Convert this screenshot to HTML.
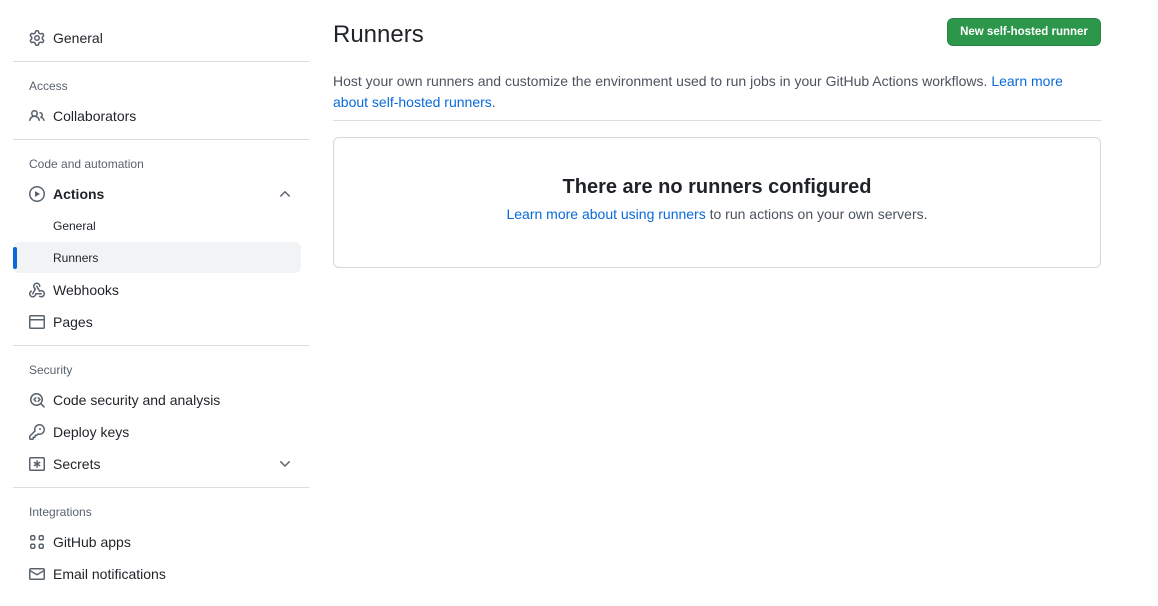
<!DOCTYPE html>
<html><head><style>
*{box-sizing:border-box;margin:0;padding:0}
body{width:1158px;height:606px;background:#fff;font-family:"Liberation Sans",sans-serif;color:#1f2328;position:relative;overflow:hidden}
.abs{position:absolute}
.item{position:absolute;left:13px;width:288px;height:32px;display:flex;align-items:center;font-size:14px}
.item svg{position:absolute;left:16px;width:16px;height:16px;fill:#59636e}
.item span{position:absolute;left:40px}
.hd{position:absolute;left:29px;font-size:12px;color:#59636e;font-weight:normal}
.hr{position:absolute;left:13px;width:296px;height:1px;background:#d8dee4}
.sub{font-size:12px}
a{color:#0969da;text-decoration:none}
</style></head><body>
<div class="item" style="top:22px"><svg viewBox="0 0 16 16"><path d="M8 0a8.2 8.2 0 0 1 .701.031C9.444.095 9.99.645 10.16 1.29l.288 1.107c.018.066.079.158.212.224.231.114.454.243.668.386.123.082.233.09.299.071l1.103-.303c.644-.176 1.392.021 1.82.63.27.385.506.792.704 1.218.315.675.111 1.422-.364 1.891l-.814.806c-.049.048-.098.147-.088.294.016.257.016.515 0 .772-.01.147.038.246.088.294l.814.806c.475.469.679 1.216.364 1.891a7.977 7.977 0 0 1-.704 1.217c-.428.61-1.176.807-1.82.63l-1.102-.302c-.067-.019-.177-.011-.3.071a5.909 5.909 0 0 1-.668.386c-.133.066-.194.158-.211.224l-.29 1.106c-.168.646-.715 1.196-1.458 1.26a8.006 8.006 0 0 1-1.402 0c-.743-.064-1.289-.614-1.458-1.26l-.289-1.106c-.018-.066-.079-.158-.212-.224a5.738 5.738 0 0 1-.668-.386c-.123-.082-.233-.09-.299-.071l-1.103.303c-.644.176-1.392-.021-1.820-.63a8.12 8.12 0 0 1-.704-1.218c-.315-.675-.111-1.422.363-1.891l.815-.806c.05-.048.098-.147.088-.294a6.214 6.214 0 0 1 0-.772c.01-.147-.038-.246-.088-.294l-.815-.806C.635 6.045.431 5.298.746 4.623a7.92 7.92 0 0 1 .704-1.217c.428-.61 1.176-.807 1.82-.63l1.102.302c.067.019.177.011.3-.071.214-.143.437-.272.668-.386.133-.066.194-.158.211-.224l.29-1.106C6.009.645 6.556.095 7.299.03 7.53.01 7.764 0 8 0Zm-.571 1.525c-.036.003-.108.036-.137.146l-.289 1.105c-.147.561-.549.967-.998 1.189-.173.086-.34.183-.5.29-.417.278-.97.423-1.529.27l-1.103-.303c-.109-.03-.175.016-.195.045-.22.312-.412.644-.573.99-.014.031-.021.11.059.19l.815.806c.411.406.562.957.53 1.456a4.709 4.709 0 0 0 0 .582c.032.499-.119 1.05-.53 1.456l-.815.806c-.081.08-.073.159-.059.19.162.346.353.677.573.989.02.03.085.076.195.046l1.102-.303c.56-.153 1.113-.008 1.53.27.161.107.328.204.501.29.447.222.85.629.997 1.189l.289 1.105c.029.109.101.143.137.146a6.6 6.6 0 0 0 1.142 0c.036-.003.108-.036.137-.146l.289-1.105c.147-.561.549-.967.998-1.189.173-.086.34-.183.5-.29.417-.278.97-.423 1.529-.27l1.103.303c.109.029.175-.016.195-.045.22-.313.411-.644.573-.99.014-.031.021-.11-.059-.19l-.815-.806c-.411-.406-.562-.957-.53-1.456a4.709 4.709 0 0 0 0-.582c-.032-.499.119-1.05.53-1.456l.815-.806c.081-.08.073-.159.059-.19a6.464 6.464 0 0 0-.573-.989c-.02-.03-.085-.076-.195-.046l-1.102.303c-.56.153-1.113.008-1.53-.27a4.44 4.440 0 0 0-.501-.29c-.447-.222-.85-.629-.997-1.189l-.289-1.105c-.029-.11-.101-.143-.137-.146a6.6 6.6 0 0 0-1.142 0ZM11 8a3 3 0 1 1-6 0 3 3 0 0 1 6 0ZM9.5 8a1.5 1.5 0 1 0-3.001.001A1.5 1.5 0 0 0 9.5 8Z"/></svg><span>General</span></div>
<div class="hr" style="top:61px"></div>
<div class="hd" style="top:79px">Access</div>
<div class="item" style="top:100px"><svg viewBox="0 0 16 16"><path d="M2 5.5a3.5 3.5 0 1 1 5.898 2.549 5.508 5.508 0 0 1 3.034 4.084.75.75 0 1 1-1.482.235 4 4 0 0 0-7.9 0 .75.75 0 0 1-1.482-.236A5.507 5.507 0 0 1 3.102 8.05 3.493 3.493 0 0 1 2 5.5ZM11 4a3.001 3.001 0 0 1 2.22 5.018 5.01 5.01 0 0 1 2.56 3.012.749.749 0 0 1-.885.954.752.752 0 0 1-.549-.514 3.507 3.507 0 0 0-2.522-2.372.75.75 0 0 1-.574-.73v-.352a.75.75 0 0 1 .416-.672A1.5 1.5 0 0 0 11 5.5.75.75 0 0 1 11 4Zm-5.5-.5a2 2 0 1 0-.001 3.999A2 2 0 0 0 5.5 3.5Z"/></svg><span>Collaborators</span></div>
<div class="hr" style="top:139px"></div>
<div class="hd" style="top:157px">Code and automation</div>
<div class="item" style="top:178px;font-weight:700"><svg viewBox="0 0 16 16"><path d="M8 0a8 8 0 1 1 0 16A8 8 0 0 1 8 0ZM1.5 8a6.5 6.5 0 1 0 13 0 6.5 6.5 0 0 0-13 0Zm4.879-2.773 4.264 2.559a.25.25 0 0 1 0 .428l-4.264 2.559A.25.25 0 0 1 6 10.559V5.442a.25.25 0 0 1 .379-.215Z"/></svg><span>Actions</span>
<svg style="left:264px" viewBox="0 0 16 16"><path d="M3.22 10.53a.749.749 0 0 1 0-1.06l4.25-4.250a.749.749 0 0 1 1.06 0l4.25 4.25a.749.749 0 1 1-1.06 1.06L8 6.811 4.28 10.53a.749.749 0 0 1-1.06 0Z"/></svg></div>
<div class="item sub" style="top:210px"><span>General</span></div>
<div class="abs" style="left:13px;top:242px;width:288px;height:31px;background:#f2f3f5;border-radius:6px"></div>
<div class="abs" style="left:13px;top:247px;width:4px;height:22px;background:#0969da;border-radius:6px"></div>
<div class="item sub" style="top:242px;height:31px"><span>Runners</span></div>
<div class="item" style="top:274px"><svg viewBox="0 0 16 16"><path d="M5.5 4.25a2.25 2.25 0 0 1 4.5 0 .75.75 0 0 0 1.5 0 3.75 3.75 0 1 0-6.14 2.889l-2.272 4.258a.75.75 0 0 0 1.324.706L7 7.25a.75.75 0 0 0-.309-1.015A2.25 2.25 0 0 1 5.5 4.25Z M7.364 3.607a.75.75 0 0 1 1.030.257l2.608 4.349a3.75 3.75 0 1 1-.628 6.785.75.75 0 0 1 .752-1.299 2.25 2.25 0 1 0-.033-3.88.75.75 0 0 1-1.03-.256L7.107 4.636a.75.75 0 0 1 .257-1.03Z M2.9 8.776A.75.75 0 0 1 2.625 9.8 2.25 2.25 0 1 0 6 11.75a.75.75 0 0 1 .75-.751h5.5a.75.75 0 0 1 0 1.5H7.425a3.751 3.751 0 1 1-5.55-3.998.75.75 0 0 1 1.024.274Z"/></svg><span>Webhooks</span></div>
<div class="item" style="top:306px"><svg viewBox="0 0 16 16"><path d="M0 2.75C0 1.784.784 1 1.75 1h12.5c.966 0 1.75.784 1.75 1.75v10.5A1.75 1.75 0 0 1 14.25 15H1.75A1.75 1.75 0 0 1 0 13.250Zm1.75-.25a.25.25 0 0 0-.25.25V5h13V2.75a.25.25 0 0 0-.25-.25ZM14.5 6.5h-13v6.75c0 .138.112.25.25.25h12.5a.25.25 0 0 0 .25-.25Z"/></svg><span>Pages</span></div>
<div class="hr" style="top:345px"></div>
<div class="hd" style="top:363px">Security</div>
<div class="item" style="top:384px"><svg viewBox="0 0 16 16"><path d="M7.5 1a6.5 6.5 0 0 1 5.18 10.43l2.84 2.84a.75.75 0 1 1-1.06 1.06l-2.84-2.84A6.5 6.5 0 1 1 7.5 1Zm0 1.5a5 5 0 1 0 0 10 5 5 0 0 0 0-10ZM6.22 5.22a.75.75 0 0 1 1.06 1.06L6.06 7.5l1.22 1.22a.75.75 0 1 1-1.06 1.06L4.47 8.03a.75.75 0 0 1 0-1.06Zm2.5 0a.75.75 0 0 1 1.06 0l1.75 1.75a.75.75 0 0 1 0 1.06L9.78 9.78a.75.75 0 1 1-1.06-1.06L9.94 7.5 8.72 6.28a.75.75 0 0 1 0-1.06Z"/></svg><span>Code security and analysis</span></div>
<div class="item" style="top:416px"><svg viewBox="0 0 16 16"><path d="M10.5 0a5.499 5.499 0 1 1-1.288 10.848l-.932.932a.749.749 0 0 1-.53.22H7v.75a.749.749 0 0 1-.22.53l-.5.5a.749.749 0 0 1-.53.22H5v.75a.749.749 0 0 1-.22.53l-.5.5a.749.749 0 0 1-.53.22h-2A1.75 1.75 0 0 1 0 14.25v-2c0-.199.079-.389.22-.53l4.932-4.932A5.5 5.5 0 0 1 10.5 0Zm-4 5.5c-.001.431.069.86.205 1.269a.75.75 0 0 1-.181.768L1.5 12.56v1.69c0 .138.112.25.25.25h1.69l.06-.06v-1.19a.75.75 0 0 1 .75-.75h1.19l.06-.06v-1.19a.75.75 0 0 1 .75-.75h1.19l1.023-1.025a.75.75 0 0 1 .768-.18A4 4 0 1 0 6.5 5.5ZM11 6a1 1 0 1 1 0-2 1 1 0 0 1 0 2Z"/></svg><span>Deploy keys</span></div>
<div class="item" style="top:448px"><svg viewBox="0 0 16 16"><path d="M0 2.75C0 1.784.784 1 1.75 1h12.5c.966 0 1.75.784 1.75 1.75v10.5A1.75 1.75 0 0 1 14.25 15H1.75A1.75 1.75 0 0 1 0 13.25Zm1.75-.25a.25.25 0 0 0-.25.25v10.5c0 .138.112.25.25.25h12.5a.25.25 0 0 0 .25-.25V2.75a.25.25 0 0 0-.25-.25Zm7 1.75v2.4l2.08-1.2.75 1.3L9.5 8l2.08 1.2-.75 1.3-2.08-1.2v2.45h-1.5V9.3l-2.08 1.2-.75-1.3L6.5 8 4.42 6.8l.75-1.3 2.08 1.2V4.25Z"/></svg><span>Secrets</span>
<svg style="left:264px" viewBox="0 0 16 16"><path d="M12.78 5.22a.749.749 0 0 1 0 1.06l-4.25 4.25a.749.749 0 0 1-1.06 0L3.22 6.28a.749.749 0 1 1 1.06-1.06L8 8.939l3.72-3.719a.749.749 0 0 1 1.06 0Z"/></svg></div>
<div class="hr" style="top:487px"></div>
<div class="hd" style="top:505px">Integrations</div>
<div class="item" style="top:526px"><svg viewBox="0 0 16 16"><path d="M1 3a2 2 0 0 1 2-2h1.5a2 2 0 0 1 2 2v1.5a2 2 0 0 1-2 2H3a2 2 0 0 1-2-2Zm2-.5a.5.5 0 0 0-.5.5v1.5a.5.5 0 0 0 .5.5h1.5a.5.5 0 0 0 .5-.5V3a.5.5 0 0 0-.5-.5ZM9.5 3a2 2 0 0 1 2-2H13a2 2 0 0 1 2 2v1.5a2 2 0 0 1-2 2h-1.5a2 2 0 0 1-2-2Zm2-.5a.5.5 0 0 0-.5.5v1.5a.5.5 0 0 0 .5.5H13a.5.5 0 0 0 .5-.5V3a.5.5 0 0 0-.5-.5ZM1 11.5a2 2 0 0 1 2-2h1.5a2 2 0 0 1 2 2V13a2 2 0 0 1-2 2H3a2 2 0 0 1-2-2Zm2-.5a.5.5 0 0 0-.5.5V13a.5.5 0 0 0 .5.5h1.5A.5.5 0 0 0 5 13v-1.5a.5.5 0 0 0-.5-.5ZM9.5 11.5a2 2 0 0 1 2-2H13a2 2 0 0 1 2 2V13a2 2 0 0 1-2 2h-1.5a2 2 0 0 1-2-2Zm2-.5a.5.5 0 0 0-.5.5V13a.5.5 0 0 0 .5.5H13a.5.5 0 0 0 .5-.5v-1.5a.5.5 0 0 0-.5-.5Z"/></svg><span>GitHub apps</span></div>
<div class="item" style="top:558px"><svg viewBox="0 0 16 16"><path d="M1.75 2h12.5c.966 0 1.75.784 1.75 1.75v8.5A1.75 1.75 0 0 1 14.25 14H1.75A1.75 1.75 0 0 1 0 12.25v-8.5C0 2.784.784 2 1.75 2ZM1.5 12.251c0 .138.112.25.25.25h12.5a.25.25 0 0 0 .25-.25V5.809L8.38 9.397a.75.75 0 0 1-.76 0L1.5 5.809v6.442Zm13-8.181v-.32a.25.25 0 0 0-.25-.25H1.75a.25.25 0 0 0-.25.25v.32L8 7.88Z"/></svg><span>Email notifications</span></div>

<div class="abs" style="left:333px;top:21px;font-size:24px">Runners</div>
<div class="abs" style="left:947px;top:18px;width:154px;height:28px;background:#2c974b;border:1px solid rgba(31,35,40,.15);border-radius:6px;color:#fff;font-size:11.5px;font-weight:700;display:flex;align-items:center;justify-content:center">New self-hosted runner</div>
<div class="abs" style="left:333px;top:71px;width:760px;font-size:14px;line-height:21px;color:#4b535d">Host your own runners and customize the environment used to run jobs in your GitHub Actions workflows. <a href="#">Learn more about self-hosted runners</a>.</div>
<div class="abs" style="left:333px;top:120px;width:768px;height:1px;background:#d8dee4"></div>
<div class="abs" style="left:333px;top:137px;width:768px;height:131px;border:1px solid #d1d9e0;border-radius:6px;text-align:center">
<div style="margin-top:38px;font-size:20px;font-weight:600">There are no runners configured</div>
<div style="margin-top:7px;font-size:14px;color:#4b535d"><a href="#">Learn more about using runners</a> to run actions on your own servers.</div>
</div>
</body></html>
